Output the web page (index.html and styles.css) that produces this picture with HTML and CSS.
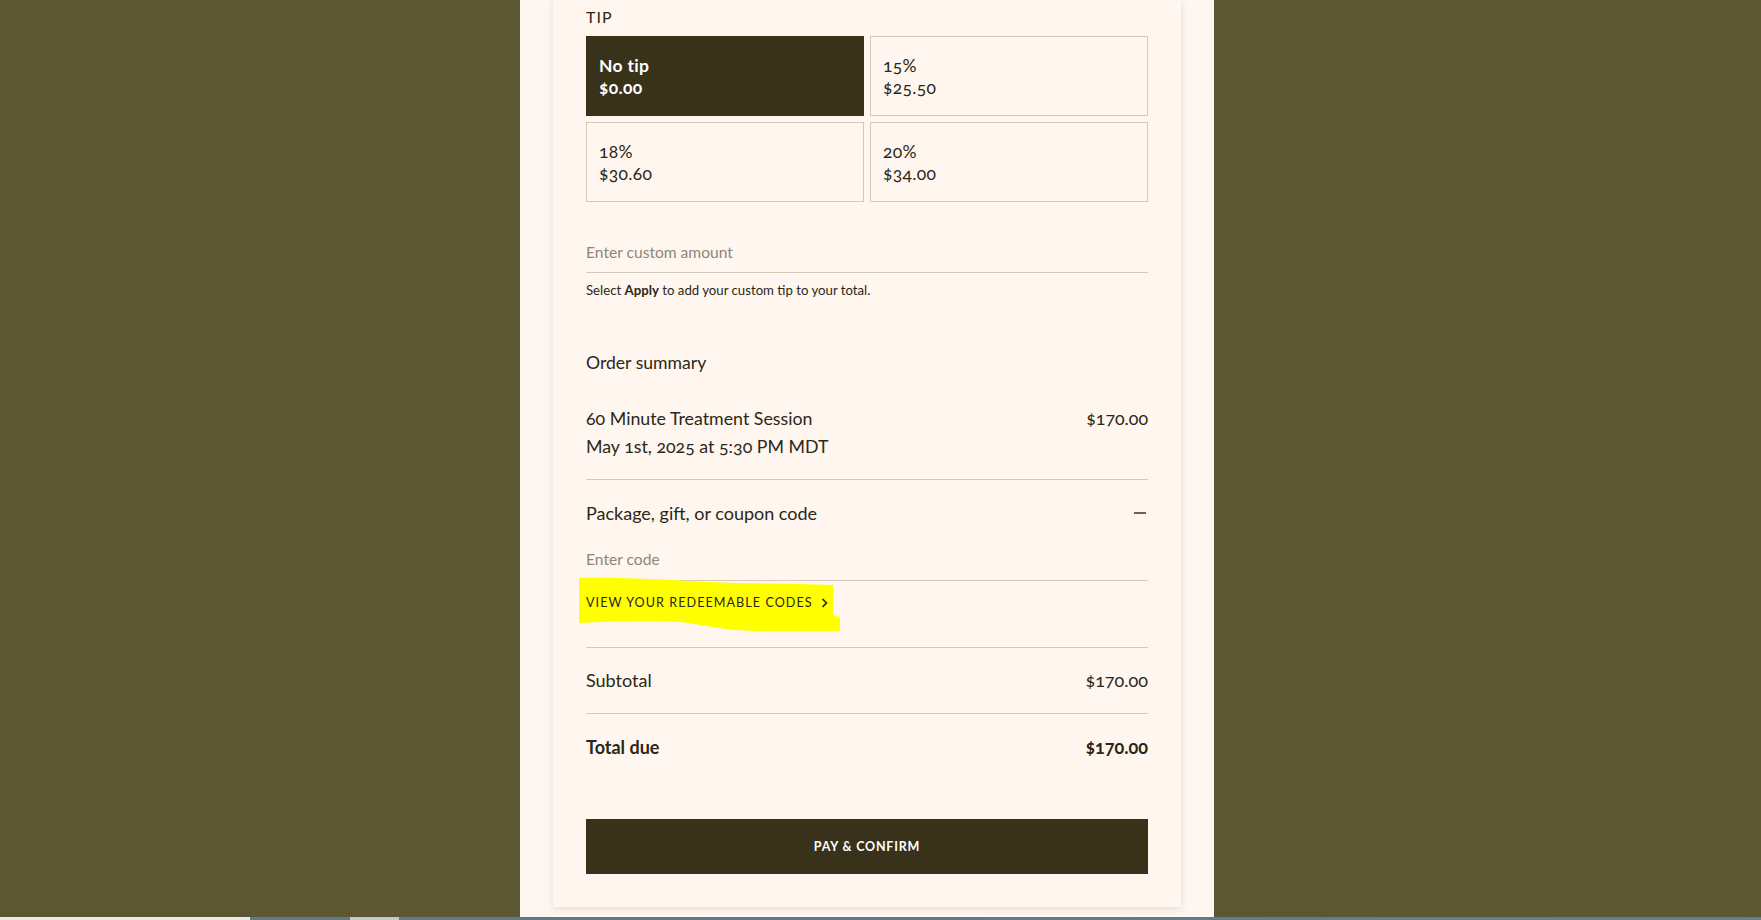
FILE: index.html
```html
<!DOCTYPE html>
<html lang="en">
<head>
<meta charset="utf-8">
<title>Checkout</title>
<link rel="stylesheet" href="styles.css">
</head>
<body>
<div class="stage">
  <div class="panel">
    <div class="card">
      <div class="tip-label">TIP</div>
      <div class="tip-grid">
        <button class="tip-option selected"><span>No tip</span><span>$0.00</span></button>
        <button class="tip-option"><span>15%</span><span>$25.50</span></button>
        <button class="tip-option"><span>18%</span><span>$30.60</span></button>
        <button class="tip-option"><span>20%</span><span>$34.00</span></button>
      </div>
      <input class="line-input custom" type="text" placeholder="Enter custom amount">
      <p class="help">Select <b>Apply</b> to add your custom tip to your total.</p>

      <h2 class="summary-title">Order summary</h2>
      <div class="item">
        <div class="item-text">
          <div>60 Minute Treatment Session</div>
          <div>May 1st, 2025 at 5:30 PM MDT</div>
        </div>
        <div class="price">$170.00</div>
      </div>

      <div class="coupon">
        <div class="coupon-head">
          <span>Package, gift, or coupon code</span>
          <span class="minus"></span>
        </div>
        <input class="line-input code" type="text" placeholder="Enter code">
        <div class="link-wrap">
          <svg class="highlight" width="264" height="56" viewBox="0 0 264 56" aria-hidden="true">
            <path d="M0 1 C40 0 90 3 130 5 C170 7 210 6 254 8 L254 38 L261 40 L261 54 L175 54 C140 53 115 46 100 45 C70 43 30 44 0 46 Z" fill="#ffff00"/>
          </svg>
          <a class="redeem" href="#">VIEW YOUR REDEEMABLE CODES
            <svg class="chev" width="7" height="10" viewBox="0 0 7 10"><path d="M1.5 1 L5.5 5 L1.5 9" fill="none" stroke="#2b2716" stroke-width="1.7"/></svg>
          </a>
        </div>
      </div>

      <div class="row subtotal"><span>Subtotal</span><span class="price">$170.00</span></div>
      <div class="row total"><span>Total due</span><span class="price">$170.00</span></div>

      <button class="pay">PAY &amp; CONFIRM</button>
    </div>
  </div>
</div>
<div class="taskbar"></div>
</body>
</html>
```
FILE: styles.css
```css
html, body {
  margin: 0;
  padding: 0;
  height: 920px;
  overflow: hidden;
}
body {
  display: flex;
  flex-direction: column;
  background: #5c5733;
  font-family: "Lato", "Open Sans", sans-serif;
  color: #2b2716;
  font-variant-numeric: oldstyle-nums;
}
.stage {
  height: 917px;
  display: flex;
  overflow: hidden;
}
.panel {
  margin-left: 520px;
  width: 694px;
  height: 917px;
  background: #fef6f0;
  padding: 0 33px;
  box-sizing: border-box;
}
.card {
  background: #fff6f0;
  box-shadow: 0 2px 7px rgba(60, 40, 20, 0.12);
  padding: 6px 33px 33px;
  display: flex;
  flex-direction: column;
}
.tip-label {
  font-size: 16px;
  line-height: 22px;
  letter-spacing: 1px;
}
.tip-grid {
  margin-top: 8px;
  display: grid;
  grid-template-columns: 1fr 1fr;
  grid-auto-rows: 80px;
  gap: 6px;
}
.tip-option {
  display: flex;
  flex-direction: column;
  justify-content: center;
  align-items: flex-start;
  padding: 2px 12px 0;
  border: 1px solid #d3c9bd;
  background: transparent;
  font-family: inherit;
  font-size: 17.5px;
  line-height: 22.5px;
  letter-spacing: 0.3px;
  color: #2b2716;
  font-variant-numeric: oldstyle-nums;
  text-align: left;
}
.tip-option.selected {
  background: #39321b;
  border-color: #39321b;
  color: #ffffff;
  font-weight: 700;
}
.line-input {
  display: block;
  width: 100%;
  box-sizing: border-box;
  border: 0;
  border-bottom: 1px solid #d3c9bd;
  background: transparent;
  font-family: inherit;
  font-size: 15.6px;
  height: 44px;
  padding: 2px 0 0;
  color: #2b2716;
  outline: none;
}
.line-input::placeholder {
  color: #8f8676;
}
.custom {
  margin-top: 27px;
}
.help {
  margin: 8px 0 0;
  font-size: 13.2px;
  line-height: 18px;
}
.help b {
  font-weight: 700;
}
.summary-title {
  margin: 52px 0 0;
  font-size: 17.6px;
  font-weight: 400;
  line-height: 24px;
}
.item {
  margin-top: 30px;
  display: flex;
  justify-content: space-between;
  align-items: flex-start;
  font-size: 17.8px;
  line-height: 27.5px;
  padding-bottom: 19px;
  border-bottom: 1px solid #d3c9bd;
}
.price {
  font-weight: 400;
}
.coupon {
  padding-top: 21px;
  border-bottom: 1px solid #d3c9bd;
  padding-bottom: 38px;
}
.coupon-head {
  display: flex;
  justify-content: space-between;
  align-items: center;
  font-size: 18px;
  line-height: 24px;
}
.minus {
  width: 12px;
  height: 2px;
  background: #6b6350;
  margin-right: 2px;
}
.code {
  margin-top: 12px;
  padding-top: 0;
}
.link-wrap {
  position: relative;
  margin-top: 10px;
  height: 18px;
}
.highlight {
  position: absolute;
  left: -7px;
  top: -14px;
}
.redeem {
  position: relative;
  display: inline-flex;
  align-items: center;
  gap: 8px;
  font-size: 12.6px;
  line-height: 18px;
  letter-spacing: 1.05px;
  color: #2b2716;
  text-decoration: none;
  font-weight: 400;
}
.row {
  display: flex;
  justify-content: space-between;
  font-size: 18px;
  line-height: 24px;
}
.subtotal {
  padding: 20px 0 21px;
  border-bottom: 1px solid #d3c9bd;
}
.total {
  padding-top: 21px;
  font-weight: 700;
}
.total .price {
  font-weight: 700;
}
.pay {
  margin-top: 60px;
  height: 55px;
  border: 0;
  background: #39321b;
  color: #ffffff;
  font-family: inherit;
  font-size: 12.5px;
  font-weight: 700;
  letter-spacing: 0.8px;
}
.taskbar {
  height: 3px;
  background: linear-gradient(to right, #e9e9e9 0, #e9e9e9 250px, #5f7985 250px, #5f7985 350px, #c2cacd 350px, #c2cacd 399px, #5f7985 399px, #62808b 100%);
}
```
